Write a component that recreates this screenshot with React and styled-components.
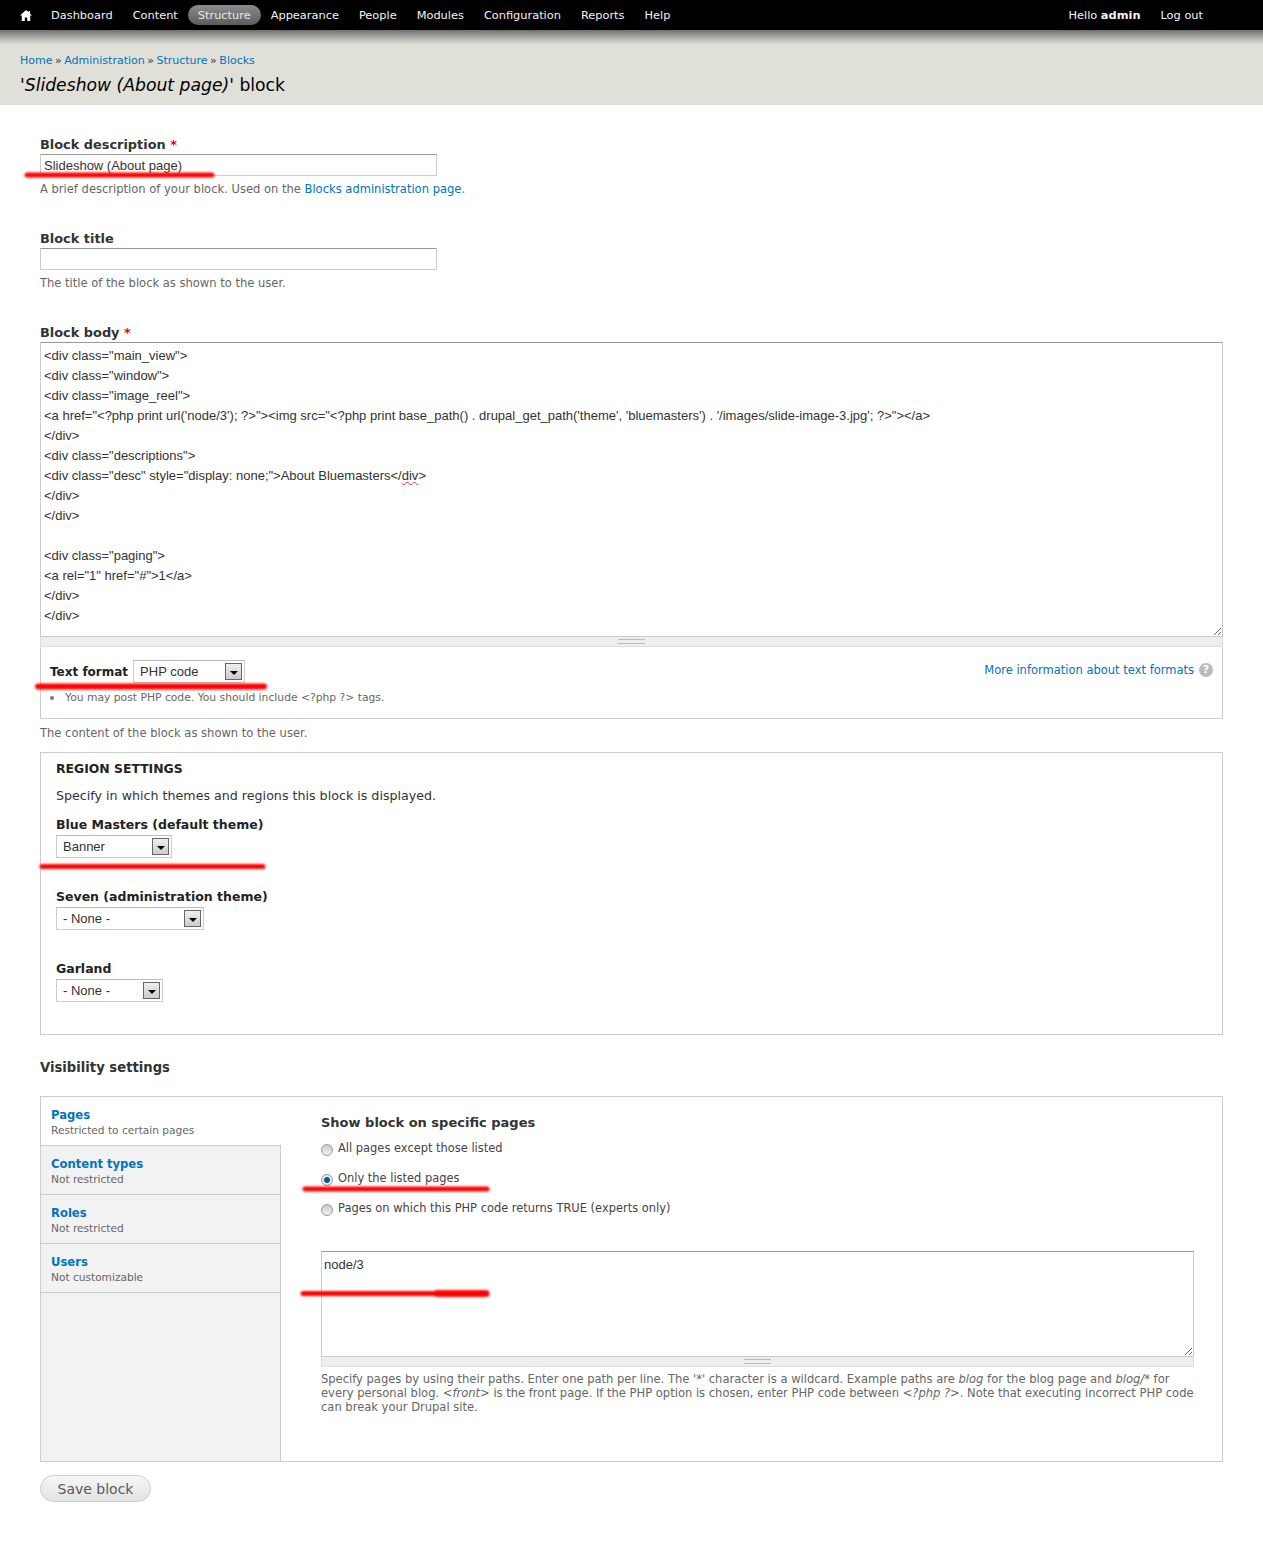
import React from "react";
import styled, { createGlobalStyle } from "styled-components";

const Global = createGlobalStyle`
  html, body { margin: 0; padding: 0; background: #fff; }
  body { font-family: "DejaVu Sans", Verdana, sans-serif; font-size: 11.5px; color: #333; }
  a { color: #0074bd; text-decoration: none; }
`;

const Page = styled.div`
  position: relative;
  min-height: 1568px;
  overflow: hidden;
`;
const Toolbar = styled.nav`
  height: 30px;
  background: #000;
  display: flex;
  align-items: center;
  padding: 0 50px 0 20px;
  font-size: 11.36px;
  color: #f4f4f4;
`;
const HomeLink = styled.span`
  width: 21px;
  display: flex;
  align-items: center;
`;
const NavItem = styled.span`
  height: 20px;
  line-height: 21px;
  padding: 0 10px;
  white-space: nowrap;
  border-radius: 10px;
  ${(p) => p.$active && "background: linear-gradient(#8c8c8c, #5c5c5c); color: #e8e8e8;"}
`;
const Spacer = styled.span`
  flex: 1;
`;
const Head = styled.header`
  height: 75px;
  background: linear-gradient(#6e6e6a 0, #a2a29d 6px, #d6d6cf 13px, #e0e0d8 16px);
  padding: 0 20px;
  box-sizing: border-box;
`;
const Crumbs = styled.div`
  padding-top: 23px;
  height: 15px;
  line-height: 15px;
  font-size: 11px;
  word-spacing: -1px;
  color: #333;
`;
const Title = styled.h1`
  margin: 5px 0 0;
  font-size: 17.2px;
  line-height: 25px;
  font-weight: normal;
  color: #000;
  em { font-style: oblique; }
`;
const Main = styled.main`
  padding: 31px 40px 0;
`;
const Field = styled.div`
  margin-bottom: ${(p) => p.$mb ?? 33}px;
`;
const Label = styled.div`
  font-weight: bold;
  font-size: 12.9px;
  line-height: 18px;
  color: #333;
  b { color: #e00; font-weight: bold; }
`;
const Input = styled.div`
  box-sizing: border-box;
  width: 397px;
  height: 22px;
  border: 1px solid #ccc;
  border-top-color: #999;
  padding: 0 3px;
  font: 13px/21px "Liberation Sans", Arial, sans-serif;
  color: #333;
`;
const Help = styled.div`
  margin-top: ${(p) => p.$mt ?? 6}px;
  line-height: 15px;
  color: #666;
  font-size: 11.52px;
  em { font-style: oblique; }
`;
const CodeArea = styled.div`
  box-sizing: border-box;
  height: ${(p) => p.$h}px;
  border: 1px solid #ccc;
  border-top-color: #999;
  padding: 2px;
  padding-top: 3px;
  padding-left: ${(p) => p.$pl}px;
  font: 13px/20px "Liberation Sans", Arial, sans-serif;
  color: #333;
  white-space: pre;
  overflow: hidden;
  resize: vertical;
  u { text-decoration: underline wavy #e33 1px; }
`;
const Grip = styled.div`
  height: 9px;
  background: #eee;
  border: 1px solid #ddd;
  border-top: 0;
  display: flex;
  justify-content: center;
  align-items: center;
  &::after {
    content: "";
    width: 27px;
    height: 3px;
    border-top: 1px solid #bbb;
    border-bottom: 1px solid #bbb;
  }
`;
const FormatBox = styled.div`
  box-sizing: border-box;
  height: 72px;
  border: 1px solid #ccc;
  border-top: 0;
  padding: 13px 9px 0;
`;
const FormatRow = styled.div`
  display: flex;
  align-items: center;
  gap: 5px;
`;
const FormatLabel = styled(Label)`
  color: #222;
  font-size: 12px;
`;
const MoreInfo = styled.div`
  margin-left: auto;
  display: flex;
  align-items: center;
  gap: 5px;
  font-size: 11.5px;
  margin-top: -3px;
`;
const HelpIcon = styled.span`
  width: 14px;
  height: 14px;
  border-radius: 50%;
  background: #bbb;
  color: #fff;
  font-weight: bold;
  font-size: 11px;
  line-height: 14px;
  text-align: center;
`;
const Tips = styled.ul`
  margin: 7px 0 0;
  padding: 0 0 0 15px;
  list-style: none;
  font-size: 10.75px;
  line-height: 15px;
  color: #666;
  position: relative;
  &::before {
    content: "";
    position: absolute;
    left: 0;
    top: 6px;
    width: 4px;
    height: 4px;
    border-radius: 50%;
    background: #777;
  }
`;
const SelectBox = styled.div`
  box-sizing: border-box;
  width: ${(p) => p.$w}px;
  height: 23px;
  border: 1px solid #ccc;
  border-top-color: #bbb;
  display: flex;
  align-items: center;
  justify-content: space-between;
  padding: 0 2px 0 6px;
  font: 13px/20px "Liberation Sans", Arial, sans-serif;
  color: #333;
  margin-top: ${(p) => p.$mt ?? 0}px;
`;
const Arrow = styled.span`
  box-sizing: border-box;
  width: 17px;
  height: 17px;
  border: 1px solid #666;
  background: linear-gradient(#eee, #ccc);
  display: flex;
  align-items: center;
  justify-content: center;
  &::after {
    content: "";
    margin-top: 2px;
    border: 4px solid transparent;
    border-top: 4px solid #000;
    border-bottom: 0;
  }
`;
const Fieldset = styled.section`
  box-sizing: border-box;
  height: 283px;
  margin-top: 11px;
  border: 1px solid #ccc;
  padding: 7px 15px 0;
`;
const Legend = styled.div`
  font-size: 12.4px;
  font-weight: bold;
  line-height: 17px;
  color: #222;
`;
const Intro = styled.div`
  margin-top: 10px;
  line-height: 17px;
  font-size: 12.67px;
  color: #333;
`;
const Region = styled.div`
  margin-top: ${(p) => p.$mt}px;
`;
const RegionLabel = styled(Label)`
  color: #222;
  font-size: 12.5px;
  line-height: 17px;
`;
const VisTitle = styled.div`
  margin-top: 24px;
  font-weight: bold;
  font-size: 13.2px;
  line-height: 17px;
  color: #333;
`;
const Tabs = styled.div`
  box-sizing: border-box;
  height: 366px;
  margin-top: 20px;
  border: 1px solid #ccc;
  display: flex;
`;
const TabList = styled.div`
  width: 240px;
  flex: none;
  box-sizing: border-box;
  background: #f2f2f2;
  border-right: 1px solid #ccc;
  margin-right: -1px;
`;
const Tab = styled.div`
  box-sizing: border-box;
  height: 49px;
  padding: 10px 10px 0;
  border-bottom: 1px solid #ccc;
  ${(p) => p.$active && "background: #fff; margin-right: -1px;"}
`;
const TabTitle = styled.a`
  display: block;
  font-weight: bold;
  font-size: 11.6px;
  line-height: 16px;
`;
const TabSub = styled.div`
  font-size: 10.6px;
  line-height: 15px;
  color: #666;
`;
const Pane = styled.div`
  flex: 1;
  padding: 16px 28px 0 41px;
`;
const PaneTitle = styled.div`
  font-weight: bold;
  font-size: 13px;
  line-height: 20px;
  color: #333;
`;
const RadioGroup = styled.div`
  margin-top: 8px;
  display: flex;
  flex-direction: column;
  gap: 15px;
  margin-bottom: 35px;
`;
const RadioRow = styled.div`
  height: 15px;
  display: flex;
  align-items: center;
  gap: 5px;
  font-size: 11.45px;
  line-height: 15px;
  color: #444;
`;
const Radio = styled.span`
  box-sizing: border-box;
  width: 12px;
  height: 12px;
  margin-top: 3px;
  border-radius: 50%;
  border: 1px solid #999;
  background: ${(p) =>
    p.$on
      ? "radial-gradient(circle, #0a5a8c 0 2.5px, #e8e8e8 3.5px)"
      : "linear-gradient(#ccc, #f0f0f0)"};
`;
const HelpText = styled(Help)`
  line-height: 14px;
  margin-top: 5px;
`;
const SaveButton = styled.button`
  display: block;
  box-sizing: border-box;
  margin-top: 13px;
  width: 111px;
  height: 27px;
  border: 1px solid #ccc;
  border-radius: 14px;
  background: linear-gradient(#f6f6f6, #e3e3e3);
  font: 14px "DejaVu Sans", sans-serif;
  color: #5a5a5a;
  padding: 0;
`;
const Marks = styled.svg`
  position: absolute;
  left: 0;
  top: 0;
  pointer-events: none;
`;

const body = `<div class="main_view">
<div class="window">
<div class="image_reel">
<a href="<?php print url('node/3'); ?>"><img src="<?php print base_path() . drupal_get_path('theme', 'bluemasters') . '/images/slide-image-3.jpg'; ?>"></a>
</div>
<div class="descriptions">
<div class="desc" style="display: none;">About Bluemasters</`;
const bodyEnd = `>
</div>
</div>

<div class="paging">
<a rel="1" href="#">1</a>
</div>
</div>`;

const nav = ["Dashboard", "Content", "Structure", "Appearance", "People", "Modules", "Configuration", "Reports", "Help"];
const tabs = [
  ["Pages", "Restricted to certain pages"],
  ["Content types", "Not restricted"],
  ["Roles", "Not restricted"],
  ["Users", "Not customizable"],
];
const marks = [
  [27, 175, 212, 5],
  [38, 686.5, 264, 6],
  [42, 866.5, 263, 5],
  [305, 1189, 487, 5],
  [303, 1293.5, 486, 5],
  [437, 1293.5, 486, 7],
];

export default function App() {
  return (
    <Page>
      <Global />
      <Toolbar>
        <HomeLink>
          <svg width="12" height="11" viewBox="0 0 12 11">
            <path d="M6 0 0 5.5h1.8V11h3V7.500h2.400V11h3V5.500H12L10 3.600V1H8.600v1.300z" fill="#fff" />
          </svg>
        </HomeLink>
        {nav.map((n) => (
          <NavItem key={n} $active={n === "Structure"}>{n}</NavItem>
        ))}
        <Spacer />
        <NavItem>Hello <strong>admin</strong></NavItem>
        <NavItem>Log out</NavItem>
      </Toolbar>
      <Head>
        <Crumbs>
          <a>Home</a> » <a>Administration</a> » <a>Structure</a> » <a>Blocks</a>
        </Crumbs>
        <Title>'<em>Slideshow (About page)</em>' block</Title>
      </Head>
      <Main>
        <Field>
          <Label>Block description <b>*</b></Label>
          <Input>Slideshow (About page)</Input>
          <Help>A brief description of your block. Used on the <a>Blocks administration page</a>.</Help>
        </Field>
        <Field>
          <Label>Block title</Label>
          <Input />
          <Help>The title of the block as shown to the user.</Help>
        </Field>
        <Field $mb={0}>
          <Label>Block body <b>*</b></Label>
          <CodeArea $h={295} $pl={3}>{body}<u>div</u>{bodyEnd}</CodeArea>
          <Grip />
          <FormatBox>
            <FormatRow>
              <FormatLabel>Text format</FormatLabel>
              <SelectBox $w={112}>PHP code<Arrow /></SelectBox>
              <MoreInfo><a>More information about text formats</a><HelpIcon>?</HelpIcon></MoreInfo>
            </FormatRow>
            <Tips><li>You may post PHP code. You should include &lt;?php ?&gt; tags.</li></Tips>
          </FormatBox>
          <Help $mt={7}>The content of the block as shown to the user.</Help>
        </Field>
        <Fieldset>
          <Legend>REGION SETTINGS</Legend>
          <Intro>Specify in which themes and regions this block is displayed.</Intro>
          <Region $mt={12}>
            <RegionLabel>Blue Masters (default theme)</RegionLabel>
            <SelectBox $w={116} $mt={2}>Banner<Arrow /></SelectBox>
          </Region>
          <Region $mt={30}>
            <RegionLabel>Seven (administration theme)</RegionLabel>
            <SelectBox $w={148} $mt={2}>- None -<Arrow /></SelectBox>
          </Region>
          <Region $mt={30}>
            <RegionLabel>Garland</RegionLabel>
            <SelectBox $w={107} $mt={2}>- None -<Arrow /></SelectBox>
          </Region>
        </Fieldset>
        <VisTitle>Visibility settings</VisTitle>
        <Tabs>
          <TabList>
            {tabs.map(([t, s], i) => (
              <Tab key={t} $active={i === 0}>
                <TabTitle>{t}</TabTitle>
                <TabSub>{s}</TabSub>
              </Tab>
            ))}
          </TabList>
          <Pane>
            <PaneTitle>Show block on specific pages</PaneTitle>
            <RadioGroup>
              <RadioRow><Radio />All pages except those listed</RadioRow>
              <RadioRow><Radio $on />Only the listed pages</RadioRow>
              <RadioRow><Radio />Pages on which this PHP code returns TRUE (experts only)</RadioRow>
            </RadioGroup>
            <CodeArea $h={106} $pl={2}>node/3</CodeArea>
            <Grip />
            <HelpText>
              Specify pages by using their paths. Enter one path per line. The '*' character is a wildcard. Example paths are <em>blog</em> for the blog page and <em>blog/*</em> for every personal blog. <em>&lt;front&gt;</em> is the front page. If the PHP option is chosen, enter PHP code between <em>&lt;?php ?&gt;</em>. Note that executing incorrect PHP code can break your Drupal site.
            </HelpText>
          </Pane>
        </Tabs>
        <SaveButton>Save block</SaveButton>
      </Main>
      <Marks width="1263" height="1568" viewBox="0 0 1263 1568">
        <defs>
          <filter id="soft"><feGaussianBlur stdDeviation="0.9" /></filter>
        </defs>
        <g filter="url(#soft)" stroke="#f00" strokeLinecap="round">
          {marks.map(([x1, y, x2, w], i) => (
            <line key={i} x1={x1} y1={y} x2={x2} y2={y} strokeWidth={w} />
          ))}
        </g>
      </Marks>
    </Page>
  );
}
